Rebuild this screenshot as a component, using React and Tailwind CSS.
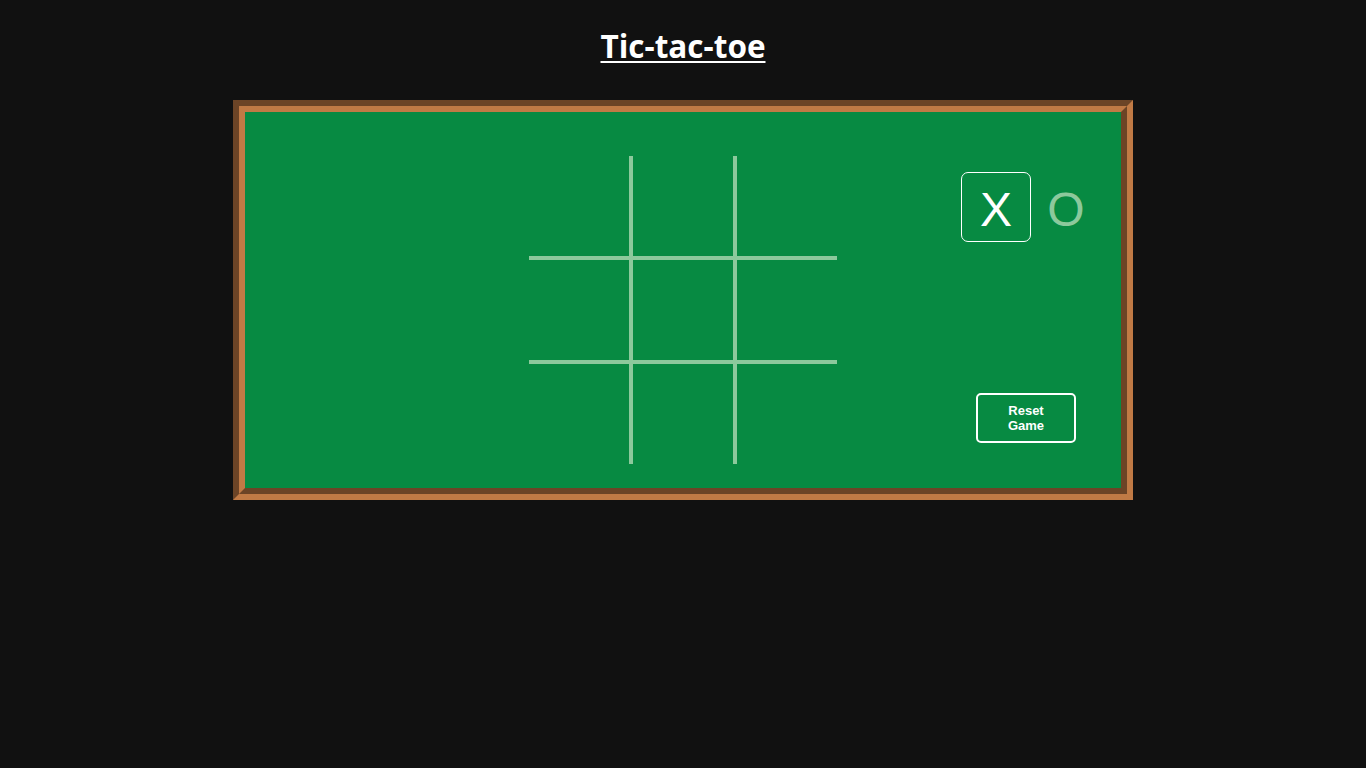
export default function App() {
  const cells = Array.from({ length: 9 });
  return (
    <div className="min-h-screen w-full bg-[#111111] flex flex-col items-center" style={{ fontFamily: '"Liberation Sans", Arial, sans-serif' }}>
      <h1 className="mt-[26px] text-[31.5px] leading-[40px] font-bold text-white underline underline-offset-[3px] decoration-2" style={{ fontFamily: '"Open Sans", "Noto Sans", sans-serif' }}>
        Tic-tac-toe
      </h1>
      <div className="mt-[34px] w-[900px] h-[400px] border-[12px] border-[#c07a45] bg-[#078a42] flex" style={{ borderStyle: 'groove' }}>
        <div className="flex-1" />
        <div className="mt-[44px] w-[308px] h-[308px] grid grid-cols-[100px_100px_100px] grid-rows-[100px_100px_100px] gap-[4px] bg-[#8cc99c]">
          {cells.map((_, i) => (
            <div key={i} className="bg-[#078a42]" />
          ))}
        </div>
        <div className="flex-1 flex flex-col items-end">
          <div className="mt-[60px] mr-[20px] flex">
            <div className="w-[70px] h-[70px] rounded-[7px] border border-white flex items-center justify-center pt-[6px] text-white text-[48px] leading-none">X</div>
            <div className="w-[70px] h-[70px] flex items-center justify-center pt-[6px] text-[#8cc99c] text-[48px] leading-none">O</div>
          </div>
          <button className="mt-[151px] mr-[45px] w-[100px] h-[50px] rounded-[5px] border-2 border-white text-white text-[13px] font-bold leading-[15px] bg-transparent px-[28px]">
            Reset Game
          </button>
        </div>
      </div>
    </div>
  );
}
